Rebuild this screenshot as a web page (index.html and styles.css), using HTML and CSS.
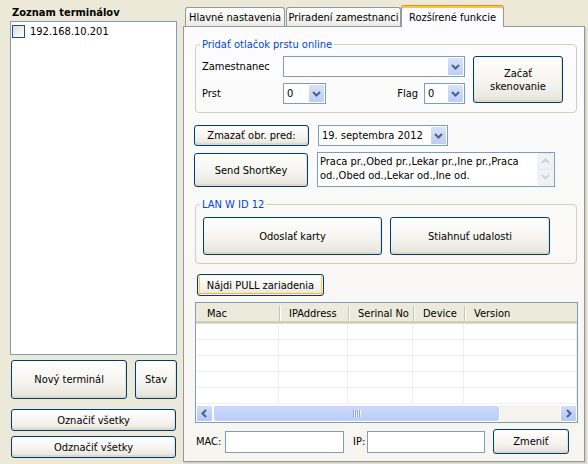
FILE: index.html
```html
<!DOCTYPE html>
<html>
<head>
<meta charset="utf-8">
<link rel="stylesheet" href="styles.css">
</head>
<body>
<div class="app">
  <div class="left">
    <div class="title">Zoznam terminálov</div>
    <div class="list">
      <div class="item"><span class="check"></span><span>192.168.10.201</span></div>
    </div>
    <div class="btnrow">
      <div class="btn b-new">Nový terminál</div>
      <div class="btn b-stav">Stav</div>
    </div>
    <div class="btn b-wide b-mark">Označiť všetky</div>
    <div class="btn b-wide b-unmark">Odznačiť všetky</div>
  </div>

  <div class="right">
    <div class="tabs">
      <div class="tab t1">Hlavné nastavenia</div>
      <div class="tab t2">Priradení zamestnanci</div>
      <div class="tab t3 active">Rozšírené funkcie</div>
    </div>
    <div class="panel">
      <fieldset class="group g1">
        <legend>Pridať otlačok prstu online</legend>
        <div class="g1-body">
          <div class="g1-fields">
            <div class="frow">
              <span class="flabel">Zamestnanec</span>
              <div class="combo c-emp"><span class="cval"></span><span class="dd"><svg width="17" height="19" viewBox="0 0 17 19"><polyline points="5,8 8.5,11.5 12,8" fill="none" stroke="#4D6185" stroke-width="2"/></svg></span></div>
            </div>
            <div class="frow frow2">
              <div class="fpair">
                <span class="flabel">Prst</span>
                <div class="combo c-small"><span class="cval">0</span><span class="dd"><svg width="17" height="19" viewBox="0 0 17 19"><polyline points="5,8 8.5,11.5 12,8" fill="none" stroke="#4D6185" stroke-width="2"/></svg></span></div>
              </div>
              <div class="fpair">
                <span class="flabel2">Flag</span>
                <div class="combo c-flag"><span class="cval">0</span><span class="dd"><svg width="17" height="19" viewBox="0 0 17 19"><polyline points="5,8 8.5,11.5 12,8" fill="none" stroke="#4D6185" stroke-width="2"/></svg></span></div>
              </div>
            </div>
          </div>
          <div class="btn b-scan">Začať<br>skenovanie</div>
        </div>
      </fieldset>

      <div class="row r1">
        <div class="btn b-del">Zmazať obr. pred:</div>
        <div class="combo c-date"><span class="cval">19. septembra 2012</span><span class="dd"><svg width="17" height="19" viewBox="0 0 17 19"><polyline points="5,8 8.5,11.5 12,8" fill="none" stroke="#4D6185" stroke-width="2"/></svg></span></div>
      </div>
      <div class="row r2">
        <div class="btn b-short">Send ShortKey</div>
        <div class="memo">
          <div class="memo-text">Praca pr.,Obed pr.,Lekar pr.,Ine pr.,Praca od.,Obed od.,Lekar od.,Ine od.</div>
          <div class="vscroll">
            <span class="sbtn"><svg width="15" height="16" viewBox="0 0 15 16"><polyline points="4,10 7.5,6.5 11,10" fill="none" stroke="#C9D3E6" stroke-width="2"/></svg></span>
            <span class="sbtn"><svg width="15" height="16" viewBox="0 0 15 16"><polyline points="4,6 7.5,9.5 11,6" fill="none" stroke="#C9D3E6" stroke-width="2"/></svg></span>
          </div>
        </div>
      </div>

      <fieldset class="group g2">
        <legend>LAN W ID 12</legend>
        <div class="g2-body">
          <div class="btn b-send">Odoslať karty</div>
          <div class="btn b-get">Stiahnuť udalosti</div>
        </div>
      </fieldset>

      <div class="btn b-find">Nájdi PULL zariadenia</div>

      <div class="lv">
        <div class="lv-head">
          <div class="col c-mac">Mac</div>
          <div class="col c-ip">IPAddress</div>
          <div class="col c-ser">Serinal No</div>
          <div class="col c-dev">Device</div>
          <div class="col c-ver">Version</div>
        </div>
        <div class="lv-body">
          <div class="lv-row"><span class="c-mac"></span><span class="c-ip"></span><span class="c-ser"></span><span class="c-dev"></span><span class="c-ver"></span></div>
          <div class="lv-row"><span class="c-mac"></span><span class="c-ip"></span><span class="c-ser"></span><span class="c-dev"></span><span class="c-ver"></span></div>
          <div class="lv-row"><span class="c-mac"></span><span class="c-ip"></span><span class="c-ser"></span><span class="c-dev"></span><span class="c-ver"></span></div>
          <div class="lv-row"><span class="c-mac"></span><span class="c-ip"></span><span class="c-ser"></span><span class="c-dev"></span><span class="c-ver"></span></div>
          <div class="lv-row"><span class="c-mac"></span><span class="c-ip"></span><span class="c-ser"></span><span class="c-dev"></span><span class="c-ver"></span></div>
        </div>
        <div class="hscroll">
          <span class="harrow"><svg width="17" height="17" viewBox="0 0 17 17"><polyline points="10,5 6.5,8.5 10,12" fill="none" stroke="#4D6185" stroke-width="2"/></svg></span>
          <span class="thumb"><span class="grip"></span></span>
          <span class="track"></span>
          <span class="harrow"><svg width="17" height="17" viewBox="0 0 17 17"><polyline points="7,5 10.5,8.5 7,12" fill="none" stroke="#4D6185" stroke-width="2"/></svg></span>
        </div>
      </div>

      <div class="row r-bottom">
        <span class="lbl-mac">MAC:</span>
        <div class="input in-mac"></div>
        <span class="lbl-ip">IP:</span>
        <div class="input in-ip"></div>
        <div class="btn b-change">Zmeniť</div>
      </div>
    </div>
  </div>
</div>
</body>
</html>
```

FILE: styles.css
```css
* { box-sizing: border-box; }
html, body { margin: 0; padding: 0; }
body {
  width: 588px;
  height: 464px;
  overflow: hidden;
  background: #ECE9D8;
  font-family: "DejaVu Sans Condensed", "Liberation Sans", sans-serif;
  font-size: 11px;
  color: #000;
}
.app { display: flex; height: 464px; }

/* left column */
.left { width: 167px; margin-left: 10px; padding-top: 5px; display: flex; flex-direction: column; }
.title { height: 16px; line-height: 16px; font-weight: bold; padding-left: 2px; }
.list { height: 334px; border: 1px solid #7F9DB9; background: #fff; padding: 3px 1px; }
.item { display: flex; align-items: center; height: 13px; gap: 5px; line-height: 13px; }
.check {
  width: 13px; height: 13px; border: 1px solid #1C5180;
  background: linear-gradient(135deg, #DCDCD7, #FFFFFF);
}
.btnrow { display: flex; margin-top: 5px; gap: 8px; padding-left: 1px; }

.btn {
  display: flex; align-items: center; justify-content: center; text-align: center;
  border: 1px solid #003C74; border-radius: 3px;
  background: linear-gradient(#FFFFFF 0%, #F4F3EE 60%, #E6E3D8 100%);
  box-shadow: inset 0 -2px 0 #DCD8CA, inset -1px 0 0 #E6E3D8;
  line-height: 13px;
}
.b-new { width: 117px; height: 39px; }
.b-stav { width: 42px; height: 39px; }
.b-wide { width: 165px; height: 22px; margin-left: 1px; }
.b-mark { margin-top: 10px; }
.b-unmark { margin-top: 5px; }

/* right */
.right { width: 402px; margin-left: 6px; display: flex; flex-direction: column; }
.tabs { display: flex; align-items: flex-end; height: 26px; padding-left: 2px; position: relative; z-index: 1; }
.tab {
  height: 19px; border: 1px solid #919B9C; border-bottom: none; border-radius: 3px 3px 0 0;
  background: linear-gradient(#FFFFFF, #ECEBE6);
  display: flex; align-items: center; justify-content: center; white-space: nowrap;
}
.t1 { width: 100px; }
.t2 { width: 115px; margin-left: 1px; }
.t3 { width: 103px; }
.tab.active {
  height: 22px; margin-bottom: -1px; background: #FCFCFE;
  border-top: 1px solid #E68B2C; box-shadow: inset 0 2px 0 #FFC73C;
  padding-top: 1px;
}
.panel {
  height: 436px; border: 1px solid #919B9C;
  background: linear-gradient(#FCFCFE, #F6F5F0);
  box-shadow: 1px 1px 0 #D0CEBF, 2px 2px 0 #E0DDCF;
  padding: 11px 0 0 10px;
}

/* group boxes */
.group {
  margin: 0 0 0 1px; width: 382px; border: 1px solid #D0D0BF; border-radius: 4px;
  padding: 0; min-width: 0;
}
.group legend { color: #0046D5; padding: 0 2px; margin-left: 4px; line-height: 13px; }
.g1-body { display: flex; padding: 5px 0 8px 6px; }
.g1-fields { width: 263px; }
.frow { display: flex; align-items: center; height: 21px; }
.frow2 { margin-top: 6px; justify-content: space-between; }
.fpair { display: flex; align-items: center; }
.flabel { width: 81px; }
.flabel2 { margin-right: 6px; }
.b-scan { width: 90px; height: 47px; margin-left: 8px; }

.combo {
  display: flex; height: 21px; border: 1px solid #7F9DB9; background: #fff;
}
.cval { flex: 1; padding-left: 3px; line-height: 19px; white-space: nowrap; overflow: hidden; }
.dd {
  width: 17px; height: 19px; display: block;
  background: linear-gradient(#D7E2FB, #BCCDF5);
  border: 1px solid #fff; border-radius: 2px;
}
.dd svg { display: block; margin: -1px; }
.c-emp { width: 183px; }
.c-small { width: 43px; }
.c-flag { width: 41px; }
.c-date { width: 130px; margin-left: 9px; }

.row { display: flex; }
.r1 { margin-top: 12px; }
.b-del { width: 115px; height: 21px; }
.r2 { margin-top: 7px; }
.b-short { width: 114px; height: 34px; }
.memo {
  width: 238px; height: 35px; margin-left: 9px; margin-top: -1px;
  border: 1px solid #7F9DB9; background: #fff; display: flex;
}
.memo-text { flex: 1; padding: 2px 2px 0 2px; line-height: 14px; }
.vscroll { width: 17px; display: flex; flex-direction: column; background: #F7F7F3; }
.sbtn { height: 16px; display: block; margin: 0 1px; background: #F0F2F5; border: 1px solid #E8ECF3; border-radius: 2px; }
.sbtn svg { display: block; margin: -1px; }

.g2 { margin-top: 11px; }
.g2-body { display: flex; gap: 8px; padding: 6px 0 8px 7px; }
.b-send { width: 179px; height: 38px; }
.b-get { width: 160px; height: 38px; }

.b-find {
  width: 127px; height: 22px; margin: 10px 0 0 3px;
  box-shadow: inset 0 0 0 1px #FFF0CF, inset 0 -2px 0 #F8B330, inset 2px 0 0 #FBC854, inset -2px 0 0 #FBC854;
}

/* list view */
.lv { width: 383px; height: 121px; margin: 6px 0 0 1px; border: 1px solid #7F9DB9; background: #fff; display: flex; flex-direction: column; }
.lv-head {
  display: flex; height: 21px; background: #EBEADB;
  box-shadow: inset 0 -1px 0 #E2DECD, inset 0 -2px 0 #CBC7B8, inset 0 -3px 0 #D6D2C2;
  padding: 2px 0 3px 0;
}
.col { display: flex; align-items: center; padding-left: 10px; position: relative; white-space: nowrap; }
.col + .col::before {
  content: ""; position: absolute; left: 0; top: 1px; bottom: 0;
  border-left: 1px solid #C7C5B2; border-right: 1px solid #fff;
}
.c-mac { width: 83px; padding-left: 11px; }
.c-ip { width: 69px; }
.c-ser { width: 65px; }
.c-dev { width: 51px; }
.c-ver { width: 113px; }
.lv-body { flex: 1; overflow: hidden; }
.lv-row { display: flex; height: 16px; border-bottom: 1px solid #EFEFEF; }
.lv-row span { display: block; border-right: 1px solid #EFEFEF; }
.hscroll { display: flex; height: 17px; background: #F4F3EE; }
.harrow {
  width: 17px; height: 17px; display: block;
  background: linear-gradient(#D0DDFB, #B4C8F6); border: 1px solid #fff; border-radius: 2px;
}
.harrow svg { display: block; margin: -1px; }
.thumb {
  width: 287px; height: 17px; display: flex; align-items: center; justify-content: center;
  background: linear-gradient(#CDDAFB, #B9CCF8); border: 1px solid #fff; border-radius: 3px;
  box-shadow: inset 0 0 0 1px #C3D3FA;
}
.grip {
  width: 8px; height: 7px;
  background: repeating-linear-gradient(90deg, #8AA5E4 0 1px, #EEF3FE 1px 2px);
}
.track { flex: 1; }

/* bottom row */
.r-bottom { margin-top: 6px; align-items: center; height: 25px; padding-left: 2px; }
.lbl-mac { width: 29px; }
.input { height: 22px; border: 1px solid #7F9DB9; background: #fff; }
.in-mac { width: 119px; }
.lbl-ip { margin-left: 9px; width: 14px; }
.in-ip { width: 118px; }
.b-change { width: 76px; height: 25px; margin-left: 8px; }
```
